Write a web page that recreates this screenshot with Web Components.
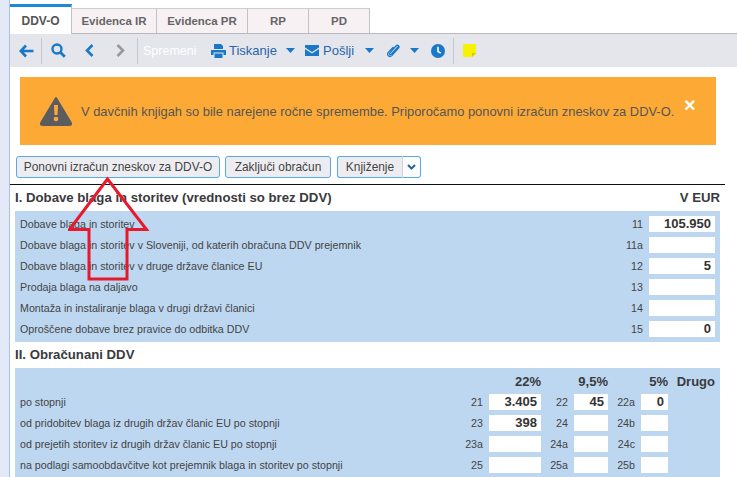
<!DOCTYPE html>
<html>
<head>
<meta charset="utf-8">
<style>
  html, body { margin: 0; padding: 0; height: 477px; overflow: hidden; background: #fff; }
  body { font-family: "Liberation Sans", Arial, sans-serif; color: #444; display: flex; }
  .strip { width: 9px; flex: none; background: #e3e9f6; border-right: 1px solid #a9c0ea; }
  main { flex: 1; min-width: 0; position: relative; }
</style>
</head>
<body>
<div class="strip"></div>
<main>
  <tab-bar></tab-bar>
  <tool-bar></tool-bar>
  <alert-box>V davčnih knjigah so bile narejene ročne spremembe. Priporočamo ponovni izračun zneskov za DDV-O.</alert-box>
  <action-bar></action-bar>
  <form-section heading="I. Dobave blaga in storitev (vrednosti so brez DDV)" unit="V EUR" ruled>
    <supply-row label="Dobave blaga in storitev" num="11" value="105.950"></supply-row>
    <supply-row label="Dobave blaga in storitev v Sloveniji, od katerih obračuna DDV prejemnik" num="11a"></supply-row>
    <supply-row label="Dobave blaga in storitev v druge države članice EU" num="12" value="5"></supply-row>
    <supply-row label="Prodaja blaga na daljavo" num="13"></supply-row>
    <supply-row label="Montaža in instaliranje blaga v drugi državi članici" num="14"></supply-row>
    <supply-row label="Oproščene dobave brez pravice do odbitka DDV" num="15" value="0"></supply-row>
  </form-section>
  <form-section heading="II. Obračunani DDV">
    <vat-row head></vat-row>
    <vat-row label="po stopnji" cells="21|3.405|22|45|22a|0"></vat-row>
    <vat-row label="od pridobitev blaga iz drugih držav članic EU po stopnji" cells="23|398|24||24b|"></vat-row>
    <vat-row label="od prejetih storitev iz drugih držav članic EU po stopnji" cells="23a||24a||24c|"></vat-row>
    <vat-row label="na podlagi samoobdavčitve kot prejemnik blaga in storitev po stopnji" cells="25||25a||25b|"></vat-row>
  </form-section>
  <red-arrow></red-arrow>
</main>
<script>
class TabBar extends HTMLElement {
  connectedCallback() {
    this.attachShadow({ mode: 'open' });
    this.shadowRoot.innerHTML = `
      <style>
        :host { display: flex; height: 29px; padding-top: 4px; border-bottom: 1px solid #b9b9bd; font-size: 11.500px; font-weight: bold; color: #666; }
        .tab { box-sizing: border-box; height: 25px; margin-top: 4px; display: flex; align-items: center; justify-content: center; background: #f7f1f4; border-right: 1px solid #c4c0c4; border-top: 1px solid #d0ccd0; }
        .on { height: 30px; margin-top: 0; margin-bottom: -1px; background: #fff; border-top: 3px solid #1e88d8; border-right: 1px solid #c4c0c4; color: #555; font-size: 12px; }
      </style>
      <div class="tab on" style="width:62px">DDV-O</div>
      <div class="tab" style="width:85px">Evidenca IR</div>
      <div class="tab" style="width:91px">Evidenca PR</div>
      <div class="tab" style="width:61px">RP</div>
      <div class="tab" style="width:61px">PD</div>
    `;
  }
}
customElements.define('tab-bar', TabBar);

class ToolBar extends HTMLElement {
  connectedCallback() {
    this.attachShadow({ mode: 'open' });
    const caret = '<svg width="9" height="5" viewBox="0 0 9 5"><path d="M0 0h9L4.500 5z" fill="#1a78c8"/></svg>';
    this.shadowRoot.innerHTML = `
      <style>
        :host { display: flex; align-items: center; height: 33px; background: #e5e5ec; font-size: 13px; color: #2a66a8; }
        .i { display: flex; align-items: center; flex: none; }
        .sep { width: 1px; height: 26px; background: #c6c6cc; flex: none; }
        .off { color: #fff; font-size: 12.500px; }
        svg { display: block; flex: none; }
      </style>
      <div class="i" style="margin-left:9px"><svg width="15" height="14" viewBox="0 0 15 14"><path d="M7 1.500 1.800 7 7 12.500M2 7h12.500" fill="none" stroke="#1a78c8" stroke-width="2.600"/></svg></div>
      <div class="sep" style="margin-left:7px"></div>
      <div class="i" style="margin-left:9px"><svg width="15" height="15" viewBox="0 0 15 15"><circle cx="6" cy="6" r="4.500" fill="none" stroke="#1a78c8" stroke-width="2.400"/><path d="m9.500 9.500 4.300 4.300" stroke="#1a78c8" stroke-width="2.800"/></svg></div>
      <div class="i" style="margin-left:19px"><svg width="9" height="13" viewBox="0 0 9 13"><path d="M7.500 1 2 6.500 7.500 12" fill="none" stroke="#1a78c8" stroke-width="2.600"/></svg></div>
      <div class="i" style="margin-left:22px"><svg width="9" height="13" viewBox="0 0 9 13"><path d="M1.500 1 7 6.500 1.500 12" fill="none" stroke="#98989c" stroke-width="2.600"/></svg></div>
      <div class="sep" style="margin-left:12px"></div>
      <div class="i off" style="margin-left:5px;width:53px">Spremeni</div>
      <div class="i" style="margin-left:15px"><svg width="15" height="14" viewBox="0 0 15 14"><path d="M3 0h7l2 2v3H3zM0 6h15v5h-2.500V8.500h-10V11H0zM3.500 9.500h8V14h-8z" fill="#1a78c8"/></svg></div>
      <div class="i" style="margin-left:3px;width:48px">Tiskanje</div>
      <div class="i" style="margin-left:9px">${caret}</div>
      <div class="i" style="margin-left:10px"><svg width="14" height="11" viewBox="0 0 14 11"><path d="M0 0h14v2.500L7 7 0 2.500zM0 4l7 4.500L14 4v7H0z" fill="#1a78c8"/></svg></div>
      <div class="i" style="margin-left:4px;width:32px">Pošlji</div>
      <div class="i" style="margin-left:10px">${caret}</div>
      <div class="i" style="margin-left:12px"><svg width="14" height="15" viewBox="0 0 14 15"><path d="M12.500 3.500 5.500 11c-1.200 1.200-2.600.2-1.600-1.100L10 3c1.700-1.700 4 .3 2.500 2.200L5.800 12.600c-2.200 2.200-5.600-.5-3.500-3.200L7.500 4" fill="none" stroke="#1a78c8" stroke-width="1.300"/></svg></div>
      <div class="i" style="margin-left:10px">${caret}</div>
      <div class="i" style="margin-left:12px"><svg width="14" height="14" viewBox="0 0 14 14"><circle cx="7" cy="7" r="7" fill="#1a78c8"/><path d="M7 2.800V7.500l2.800 1.600" fill="none" stroke="#fff" stroke-width="1.600"/></svg></div>
      <div class="sep" style="margin-left:8px"></div>
      <div class="i" style="margin-left:9px"><svg width="13" height="13" viewBox="0 0 13 13"><path d="M1 0h11a1 1 0 0 1 1 1v8l-4 4H1a1 1 0 0 1-1-1V1a1 1 0 0 1 1-1z" fill="#f7f200"/><path d="M9 13V9h4z" fill="#d8c800"/></svg></div>
    `;
  }
}
customElements.define('tool-bar', ToolBar);

class AlertBox extends HTMLElement {
  connectedCallback() {
    this.attachShadow({ mode: 'open' });
    this.shadowRoot.innerHTML = `
      <style>
        :host { display: flex; align-items: center; box-sizing: border-box; width: 696px; height: 68px; margin: 10px 0 0 10px; padding-left: 19px; background: #fcaa35; color: #555; font-size: 12.900px; position: relative; white-space: nowrap; }
        svg { flex: none; margin-right: 8px; }
        .x { position: absolute; left: 664px; top: 16px; color: #fff; font-size: 20px; font-weight: bold; line-height: 24px; }
      </style>
      <svg width="34" height="30" viewBox="0 0 34 30"><path d="M17 2 32 27a1.500 1.500 0 0 1-1 2H3a1.500 1.500 0 0 1-1-2z" fill="#5c5c60" stroke="#5c5c60" stroke-width="2" stroke-linejoin="round"/><path d="M15 9h4l-.5 10h-3z" fill="#fcaa35"/><circle cx="17" cy="23" r="2.300" fill="#fcaa35"/></svg>
      <slot></slot>
      <div class="x">×</div>
    `;
  }
}
customElements.define('alert-box', AlertBox);

class ActionBar extends HTMLElement {
  connectedCallback() {
    this.attachShadow({ mode: 'open' });
    this.shadowRoot.innerHTML = `
      <style>
        :host { display: flex; height: 22px; margin: 11px 0 0 6px; font-size: 11.900px; color: #444; }
        .b { box-sizing: border-box; height: 22px; display: flex; align-items: center; justify-content: center; border: 1px solid #5aa9e6; border-radius: 3px; background: #ededf1; white-space: nowrap; }
        .main { border-right: 0; border-radius: 3px 0 0 3px; }
        .drop { border-radius: 0 3px 3px 0; border-left: 1px solid #d4d4d8; background: #fbfbfb; }
      </style>
      <div class="b" style="width:204px">Ponovni izračun zneskov za DDV-O</div>
      <div class="b" style="width:106px;margin-left:5px">Zaključi obračun</div>
      <div class="b main" style="width:65px;margin-left:6px">Knjiženje</div>
      <div class="b drop" style="width:19px"><svg width="9" height="6" viewBox="0 0 9 6"><path d="M1 1l3.500 3.500L8 1" fill="none" stroke="#2a6496" stroke-width="2"/></svg></div>
    `;
  }
}
customElements.define('action-bar', ActionBar);

class FormSection extends HTMLElement {
  connectedCallback() {
    this.attachShadow({ mode: 'open' });
    this.shadowRoot.innerHTML = `
      <style>
        :host { display: block; width: 715px; box-sizing: border-box; padding: 0 5px; }
        :host([ruled]) { border-top: 1px solid #111; margin-top: 6px; }
        .t { height: 26px; box-sizing: border-box; padding-bottom: 2px; display: flex; align-items: center; justify-content: space-between; font-size: 13.200px; font-weight: bold; color: #3a3a3e; }
        .p { background: #bdd7f1; padding: 5px; display: grid; row-gap: 5px; }
      </style>
      <div class="t"><span>${this.getAttribute('heading')}</span><span>${this.getAttribute('unit') || ''}</span></div>
      <div class="p"><slot></slot></div>
    `;
  }
}
customElements.define('form-section', FormSection);

const fieldCss = `
  :host { display: grid; height: 16px; align-items: center; font-size: 10.700px; color: #444; }
  .l { white-space: nowrap; overflow: visible; }
  .n { text-align: right; padding-right: 6px; }
  .v { background: #fff; height: 16px; line-height: 16px; text-align: right; padding-right: 4px; box-sizing: border-box; font-size: 13px; font-weight: bold; color: #333; }
  .h { text-align: right; font-size: 13px; font-weight: bold; color: #3a3a3e; white-space: nowrap; }
`;

class SupplyRow extends HTMLElement {
  connectedCallback() {
    this.attachShadow({ mode: 'open' });
    this.shadowRoot.innerHTML = `
      <style>${fieldCss} :host { grid-template-columns: 1fr 30px 66px; }</style>
      <div class="l">${this.getAttribute('label')}</div>
      <div class="n">${this.getAttribute('num')}</div>
      <div class="v">${this.getAttribute('value') || ''}</div>
    `;
  }
}
customElements.define('supply-row', SupplyRow);

class VatRow extends HTMLElement {
  connectedCallback() {
    this.attachShadow({ mode: 'open' });
    const cols = `<style>${fieldCss} :host { grid-template-columns: 1fr 30px 52px 33px 34px 33px 27px 47px; }</style>`;
    if (this.hasAttribute('head')) {
      this.shadowRoot.innerHTML = `${cols}
        <div></div><div></div><div class="h">22%</div><div></div><div class="h">9,5%</div><div></div><div class="h">5%</div><div class="h">Drugo</div>`;
      return;
    }
    const c = this.getAttribute('cells').split('|');
    this.shadowRoot.innerHTML = `${cols}
      <div class="l">${this.getAttribute('label')}</div>
      <div class="n">${c[0]}</div><div class="v">${c[1]}</div>
      <div class="n">${c[2]}</div><div class="v">${c[3]}</div>
      <div class="n">${c[4]}</div><div class="v">${c[5]}</div>
      <div></div>`;
  }
}
customElements.define('vat-row', VatRow);

class RedArrow extends HTMLElement {
  connectedCallback() {
    this.attachShadow({ mode: 'open' });
    this.shadowRoot.innerHTML = `
      <style>:host { position: absolute; left: 58px; top: 176px; width: 90px; height: 106px; pointer-events: none; }</style>
      <svg width="90" height="106" viewBox="0 0 90 106"><path d="M39.500 3 1.500 53.500h19.500v49.500h38v-49.500h19.500z" fill="none" stroke="#e8192c" stroke-width="3"/></svg>
    `;
  }
}
customElements.define('red-arrow', RedArrow);
</script>
</body>
</html>
